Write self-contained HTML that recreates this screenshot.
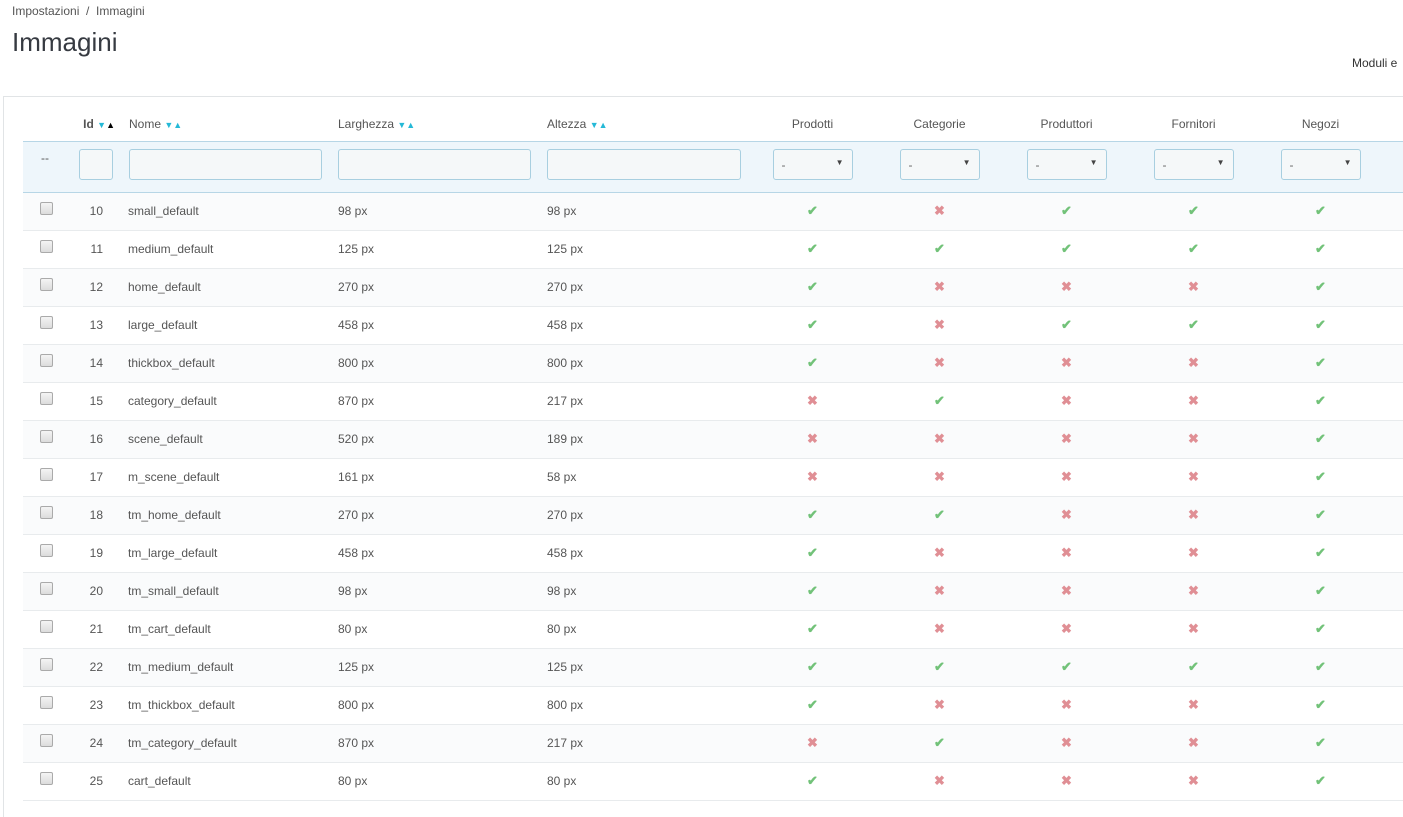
<!DOCTYPE html>
<html><head><meta charset="utf-8"><style>
body{margin:0;width:1403px;height:807px;overflow:hidden;background:#fff;font-family:"Liberation Sans",sans-serif;color:#555;font-size:12px;position:relative}
.bc{position:absolute;left:12px;top:4px;font-size:12px;color:#555}
h1{position:absolute;left:12px;top:27px;margin:0;font-size:26px;font-weight:normal;color:#363a41}
.mod{position:absolute;left:1352px;top:56px;font-size:12px;color:#333;white-space:nowrap}
.panel{position:absolute;left:3px;top:96px;width:1420px;height:720px;border-top:1px solid #e1e4e6;border-left:1px solid #e1e4e6}
table{position:absolute;left:23px;top:105px;border-collapse:collapse;table-layout:fixed;width:1380px}
td,th{padding:0;white-space:nowrap}
th{height:36px;font-weight:normal;color:#555;text-align:left;font-size:12px;padding-top:2px;box-sizing:border-box}
th.c{text-align:center}
.ar{color:#25b9d7;font-size:9px}
.ar.k{color:#000}
tr.f td{background:#eef6fb;height:41px;padding-top:7px;vertical-align:top;border-top:1px solid #b7d6e6;border-bottom:1px solid #b7d6e6}
.in{display:block;height:31px;border:1px solid #a8cfe0;border-radius:3px;background:#f5f8f9;box-sizing:border-box}
.sel{display:inline-block;width:80px;height:31px;border:1px solid #a8cfe0;border-radius:3px;background:#f5f8f9;box-sizing:border-box;position:relative;text-align:left;vertical-align:top}
.sel:before{content:"-";position:absolute;left:8px;top:8px;color:#666}
.sel:after{content:"▼";position:absolute;right:8px;top:8px;font-size:8px;color:#444}
tr.r td{height:37px;border-bottom:1px solid #e8ebed}
tr.r:nth-child(odd) td{background:#fafbfc}
.cb{display:inline-block;width:11px;height:11px;border:1px solid #aaa;border-radius:2px;background:linear-gradient(#f4f4f4,#dcdcdc);margin-left:17px;vertical-align:2px}
.id{text-align:right;padding-right:18px}
.n{padding-left:7px}.w{padding-left:8px}
.y,.x{text-align:center;font-size:13px;font-weight:bold}
.y{color:#72c279}.x{color:#e08f95}
</style></head><body>
<div class="bc">Impostazioni &nbsp;/&nbsp; Immagini</div>
<h1>Immagini</h1>
<div class="mod">Moduli e</div>
<div class="panel"></div>
<table>
<colgroup><col style="width:48px"><col style="width:50px"><col style="width:209px"><col style="width:209px"><col style="width:210px"><col style="width:127px"><col style="width:127px"><col style="width:127px"><col style="width:127px"><col style="width:127px"><col></colgroup>
<tr><th></th><th style="text-align:right;padding-right:6px"><b>Id</b> <span class="ar">▼</span><span class="ar k">▲</span></th><th style="padding-left:8px">Nome <span class="ar">▼▲</span></th><th style="padding-left:8px">Larghezza <span class="ar">▼▲</span></th><th style="padding-left:8px">Altezza <span class="ar">▼▲</span></th><th class="c">Prodotti</th><th class="c">Categorie</th><th class="c">Produttori</th><th class="c">Fornitori</th><th class="c">Negozi</th><th></th></tr>
<tr class="f"><td style="padding-left:18px;padding-top:9px">--</td><td><span class="in" style="width:34px;margin-left:8px"></span></td><td><span class="in" style="width:193px;margin-left:8px"></span></td><td><span class="in" style="width:193px;margin-left:8px"></span></td><td><span class="in" style="width:194px;margin-left:8px"></span></td><td style="text-align:center"><span class="sel"></span></td><td style="text-align:center"><span class="sel"></span></td><td style="text-align:center"><span class="sel"></span></td><td style="text-align:center"><span class="sel"></span></td><td style="text-align:center"><span class="sel"></span></td><td></td></tr>
<tbody id="b"></tbody>
</table>
<script>
var d=[[10,"small_default",98,98,"10111"],[11,"medium_default",125,125,"11111"],[12,"home_default",270,270,"10001"],[13,"large_default",458,458,"10111"],[14,"thickbox_default",800,800,"10001"],[15,"category_default",870,217,"01001"],[16,"scene_default",520,189,"00001"],[17,"m_scene_default",161,58,"00001"],[18,"tm_home_default",270,270,"11001"],[19,"tm_large_default",458,458,"10001"],[20,"tm_small_default",98,98,"10001"],[21,"tm_cart_default",80,80,"10001"],[22,"tm_medium_default",125,125,"11111"],[23,"tm_thickbox_default",800,800,"10001"],[24,"tm_category_default",870,217,"01001"],[25,"cart_default",80,80,"10001"]];
var h="";d.forEach(function(r){h+='<tr class="r"><td><span class="cb"></span></td><td class="id">'+r[0]+'</td><td class="n">'+r[1]+'</td><td class="w">'+r[2]+' px</td><td class="w">'+r[3]+' px</td>';for(var i=0;i<5;i++)h+=r[4][i]=="1"?'<td class="y">✔</td>':'<td class="x">✖</td>';h+='<td></td></tr>';});
document.getElementById("b").innerHTML=h;
</script>
</body></html>
